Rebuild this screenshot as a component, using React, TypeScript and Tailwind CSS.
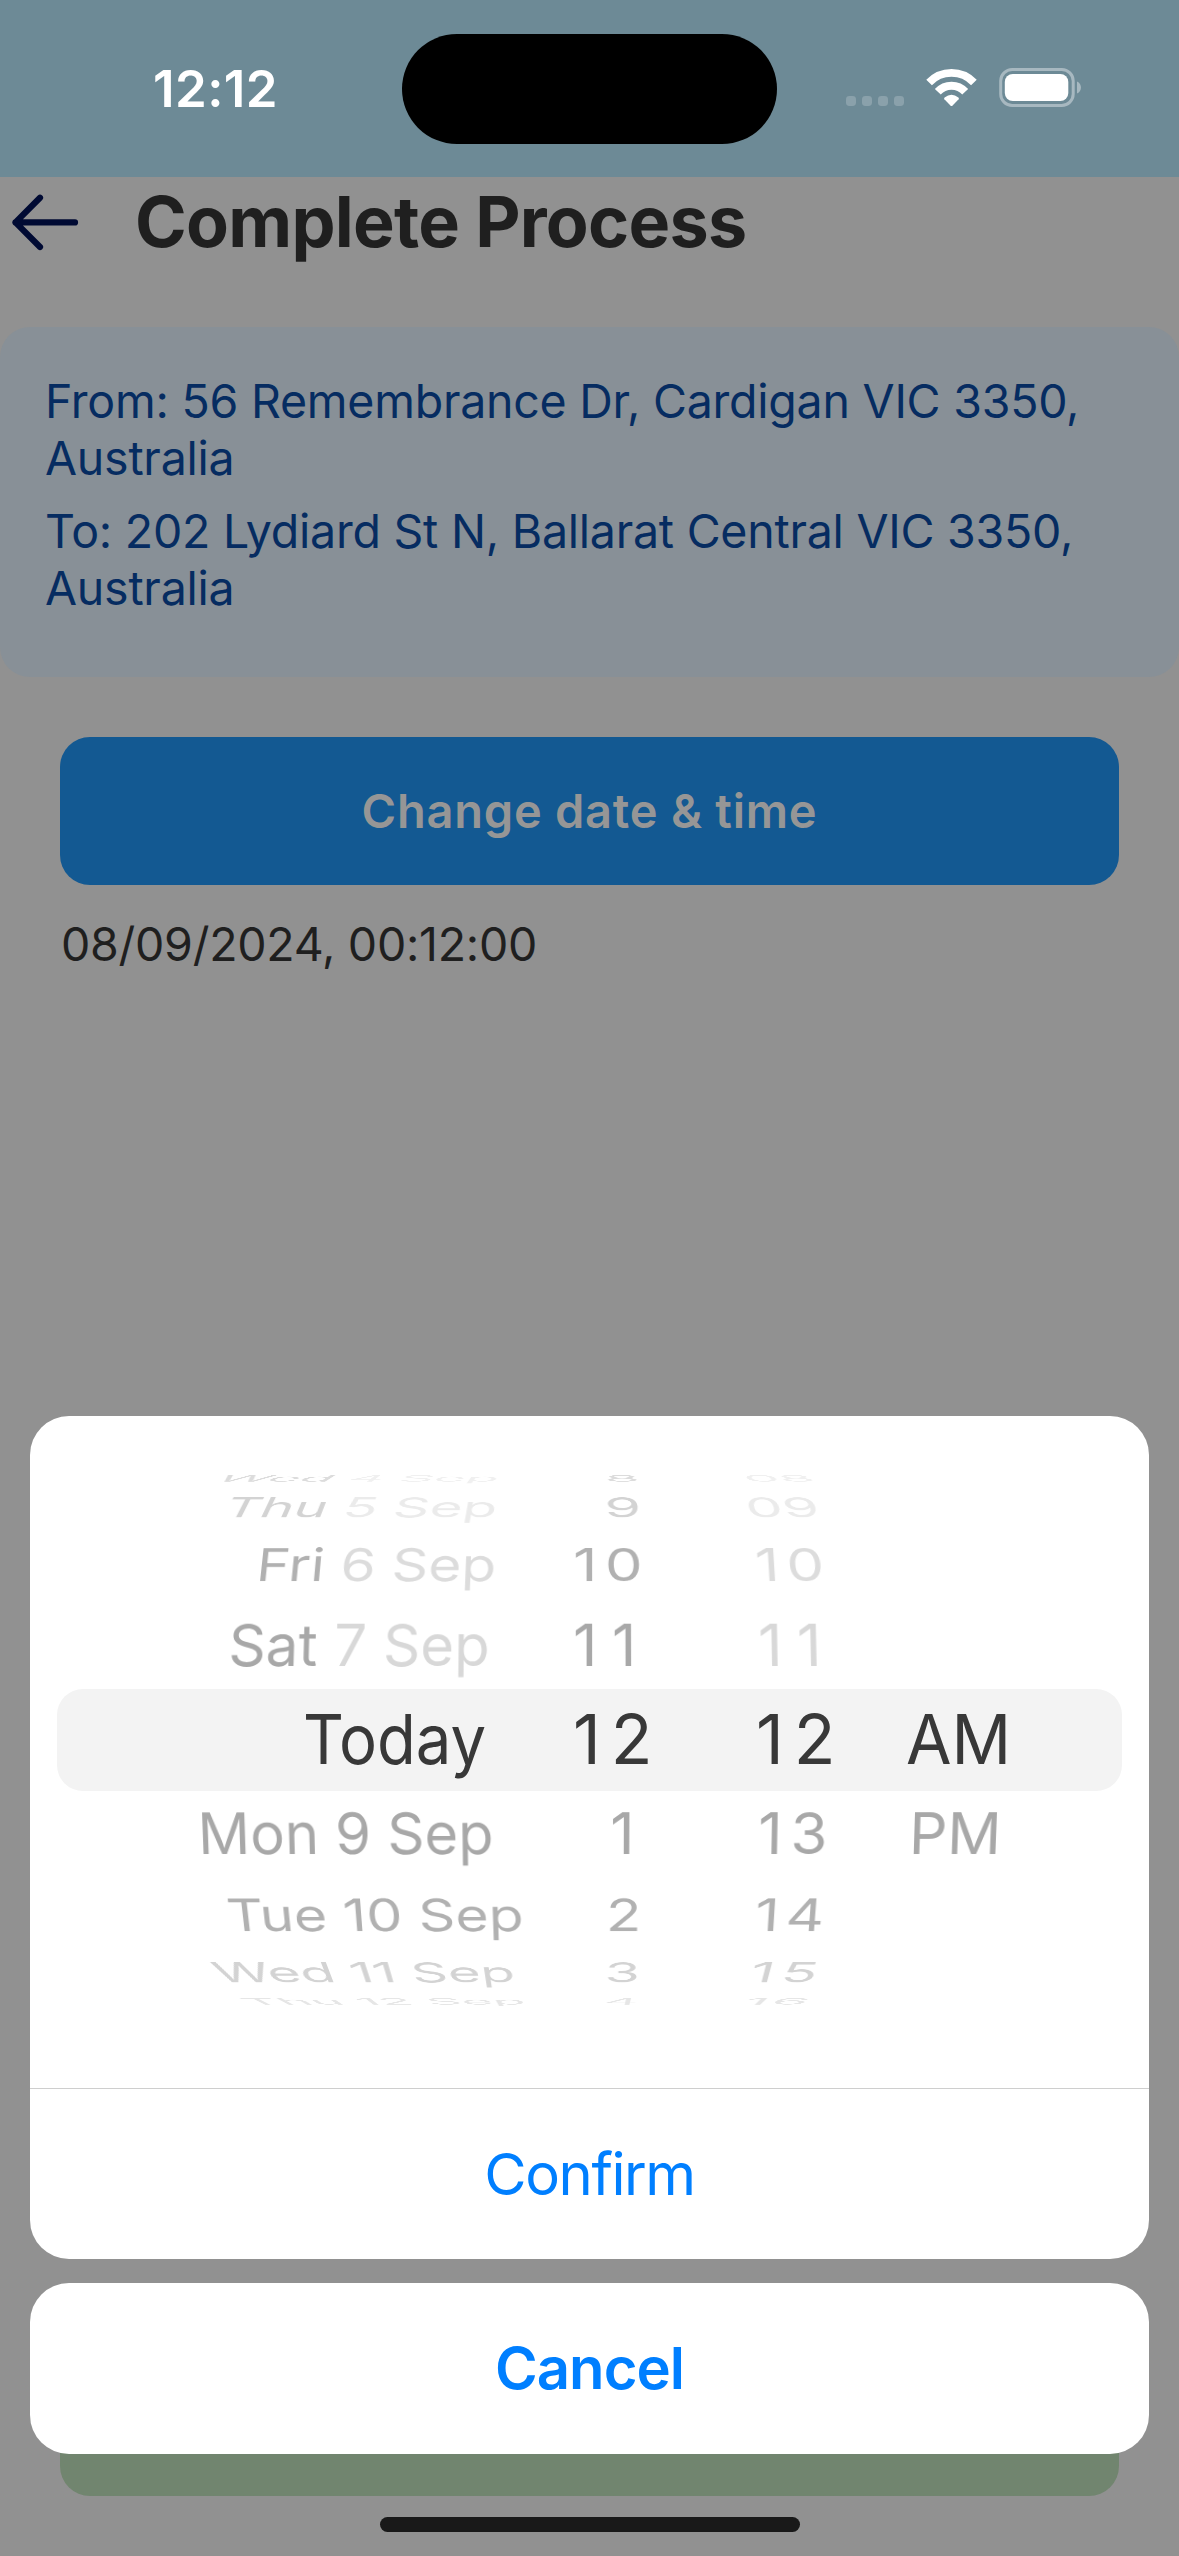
import type { ReactNode } from "react";

type Cell = {
  text: string;
  day?: string;
  left: number;
  scale?: number;
  spacing?: number;
  color?: string;
};

type WheelRow = {
  height: number;
  cap: number;
  tilt: number;
  side: "upper" | "lower";
  color: string;
  faded?: string;
  cells: Cell[];
};

const CAP = 43.66;
const COLUMN_WIDTHS = ["w-[503px]", "w-[170px]", "w-[160px]", "w-[232px]"];

const upperRows: WheelRow[] = [
  {
    height: 66, cap: 6.5, tilt: 0.04, side: "upper", color: "#dcdcdc", faded: "#f0f0f0",
    cells: [
      { day: "Wed", text: " 4 Sep", left: 154.6, scale: 0.919 },
      { text: "8", left: 45, scale: 0.955 },
      { text: "08", left: 17, scale: 0.944 },
    ],
  },
  {
    height: 36, cap: 20, tilt: 0.03, side: "upper", color: "#d3d3d3", faded: "#ebebeb",
    cells: [
      { day: "Thu", text: " 5 Sep", left: 163, scale: 0.951 },
      { text: "9", left: 44.8 },
      { text: "09", left: 18, scale: 0.988 },
    ],
  },
  {
    height: 64, cap: 33, tilt: 0.011, side: "upper", color: "#b1b1b1", faded: "#dcdcdc",
    cells: [
      { day: "Fri", text: " 6 Sep", left: 198.2, scale: 0.952 },
      { text: "10", left: 13, spacing: 7.6 },
      { text: "10", left: 26, spacing: 7 },
    ],
  },
  {
    height: 85, cap: 42, tilt: 0.004, side: "upper", color: "#a8a8a8", faded: "#d8d8d8",
    cells: [
      { day: "Sat", text: " 7 Sep", left: 170.8, scale: 0.97 },
      { text: "11", left: 13, spacing: 14.6 },
      { text: "11", left: 28.6, spacing: 14.6 },
    ],
  },
];

const lowerRows: WheelRow[] = [
  {
    height: 63, cap: 41.5, tilt: 0.004, side: "lower", color: "#a8a8a8",
    cells: [
      { text: "Mon 9 Sep", left: 140.4, scale: 0.966 },
      { text: "1", left: 50.3 },
      { text: "13", left: 28.6, spacing: 8.1 },
      { text: "PM", left: 19.7 },
    ],
  },
  {
    height: 77, cap: 32.5, tilt: 0.011, side: "lower", color: "#b1b1b1",
    cells: [
      { text: "Tue 10 Sep", left: 167.6, scale: 0.959 },
      { text: "2", left: 45.8, scale: 0.976 },
      { text: "14", left: 26, spacing: 6.7 },
    ],
  },
  {
    height: 51, cap: 20, tilt: 0.03, side: "lower", color: "#d3d3d3",
    cells: [
      { text: "Wed 11 Sep", left: 152, scale: 0.95 },
      { text: "3", left: 44.9, scale: 0.968 },
      { text: "15", left: 23, spacing: 7.3 },
    ],
  },
  {
    height: 22, cap: 6.5, tilt: 0.04, side: "lower", color: "#e6e6e6",
    cells: [
      { text: "Thu 12 Sep", left: 179.7, scale: 0.912 },
      { text: "4", left: 43.8, scale: 0.921 },
      { text: "16", left: 18, spacing: 3.6 },
    ],
  },
];

/* Flattens a row as if it were painted on the face of a cylinder. */
function wheelTransform({ cap, tilt, side }: WheelRow) {
  const ky = (cap / CAP) * (1 + tilt);
  const q = tilt / CAP;
  if (side === "upper") {
    return `matrix3d(1,0,0,0, 0,${ky},0,${-q}, 0,0,1,0, 0,0,0,1)`;
  }
  return `translateY(${-cap}px) matrix3d(1,0,0,0, 0,${ky},0,${q}, 0,0,1,0, 0,0,0,1) translateY(${CAP}px)`;
}

function Row({ row }: { row: WheelRow }) {
  return (
    <div className="flex items-end" style={{ height: row.height }}>
      <div
        className="flex h-[43.66px] w-full text-[60px] leading-[43.66px]"
        style={{ transform: wheelTransform(row), transformOrigin: "532px 100%", color: row.color }}
      >
        {row.cells.map((cell, i) => (
          <div key={i} className={COLUMN_WIDTHS[i]}>
            <WheelText cell={i === 2 && row.faded ? { ...cell, color: row.faded } : cell}>
              {cell.day ? (
                <>
                  {cell.day}
                  <span style={{ color: row.faded }}>{cell.text}</span>
                </>
              ) : (
                cell.text
              )}
            </WheelText>
          </div>
        ))}
      </div>
    </div>
  );
}

function WheelText({ cell, children }: { cell: Cell; children: ReactNode }) {
  return (
    <span
      className="block w-max origin-left whitespace-pre"
      style={{
        marginLeft: cell.left,
        transform: cell.scale ? `scaleX(${cell.scale})` : undefined,
        letterSpacing: cell.spacing,
        color: cell.color,
      }}
    >
      {children}
    </span>
  );
}

function StatusBar() {
  return (
    <header className="flex h-[177px] items-center bg-[#6d8a96]">
      <div className="w-[402px] pl-[153px] text-[51px] leading-none font-semibold tracking-[0.4px] text-white">12:12</div>
      <div className="mt-px h-[110px] w-[375px] rounded-full bg-black" />
      <svg className="ml-[69px] h-[55px] w-[240px]" viewBox="0 0 240 55" fill="none">
        <g fill="#8aa1ab">
          <rect x="0" y="35" width="10" height="10" rx="3.4" />
          <rect x="16" y="35" width="10" height="10" rx="3.4" />
          <rect x="32" y="35" width="10" height="10" rx="3.4" />
          <rect x="48" y="35" width="10" height="10" rx="3.4" />
        </g>
        <path d="M83.1 21.5A31 31 0 0 1 127.9 21.5" stroke="#fff" strokeWidth="7.8" />
        <path d="M91.8 30.8A18.6 18.6 0 0 1 119.2 30.8" stroke="#fff" strokeWidth="8" />
        <path d="M106.6 44.6q-1.1 1-2.2 0l-6-6.4q-.8-1 .2-1.8 6.9-5.3 13.8 0 1 .8.2 1.8z" fill="#fff" />
        <rect x="154.7" y="8.5" width="72.5" height="36" rx="11.5" stroke="#a7b8c0" strokeWidth="3" />
        <rect x="158.8" y="13" width="63.5" height="27" rx="8" fill="#fff" />
        <path d="M231 20.5c5.3 2 5.3 10 0 12z" fill="#a7b8c0" />
      </svg>
    </header>
  );
}

export default function App() {
  return (
    <div className="relative flex h-[2556px] w-[1179px] flex-col overflow-hidden bg-[#919191] font-['Inter',sans-serif]">
      <StatusBar />

      <div className="flex h-[89px] items-center pl-[11px]">
        <svg className="h-[58px] w-[68px]" viewBox="0 0 68 58" fill="none" stroke="#000a33" strokeWidth="6.2" strokeLinecap="round" strokeLinejoin="round">
          <path d="M64 29.4H4.5M29 4.8 4.5 29.4 29 54" />
        </svg>
        <h1 className="ml-[56px] text-[70px] leading-none font-bold tracking-[-0.72px] text-[#1f1f1f]">Complete Process</h1>
      </div>

      <section className="mt-[61px] flex h-[350px] flex-col gap-4 rounded-[30px] bg-[#889097] px-[45px] pt-[46px] text-[46.5px] leading-[57px] tracking-[-0.24px] text-[#062c61]">
        <p>From: 56 Remembrance Dr, Cardigan VIC 3350, Australia</p>
        <p>To: 202 Lydiard St N, Ballarat Central VIC 3350, Australia</p>
      </section>

      <button className="mx-[60px] mt-[60px] h-[148px] shrink-0 rounded-[30px] bg-[#135992] text-[47px] font-semibold tracking-[0.75px] text-[#969696]">
        Change date &amp; time
      </button>
      <p className="mt-[31px] ml-[61px] text-[46.5px] leading-[56px] tracking-[-0.27px] text-[#1f1f1f]">08/09/2024, 00:12:00</p>

      <div className="mx-[60px] mt-auto mb-[60px] h-[148px] shrink-0 rounded-[30px] bg-[#71856f]" />

      <div className="absolute inset-x-[30px] top-[1416px] flex flex-col gap-6">
        <div className="flex h-[843px] flex-col overflow-hidden rounded-[39px] bg-white">
          <div className="flex flex-1 flex-col px-[27px]">
            {upperRows.map((row, i) => (
              <Row key={i} row={row} />
            ))}
            <div className="mt-[22px] flex h-[102px] shrink-0 items-end rounded-[26px] bg-[#f3f3f3] pb-[26px] text-[68.5px] leading-[49.84px] text-[#383838]">
              <div className="w-[503px]">
                <WheelText cell={{ text: "Today", left: 246.2, scale: 0.926 }}>Today</WheelText>
              </div>
              <div className="w-[170px]">
                <WheelText cell={{ text: "12", left: 13, spacing: 10 }}>12</WheelText>
              </div>
              <div className="w-[160px]">
                <WheelText cell={{ text: "12", left: 26, spacing: 10 }}>12</WheelText>
              </div>
              <div className="w-[232px]">
                <WheelText cell={{ text: "AM", left: 16.4, scale: 0.964 }}>AM</WheelText>
              </div>
            </div>
            <div className="mt-px flex flex-col">
              {lowerRows.map((row, i) => (
                <Row key={i} row={row} />
              ))}
            </div>
          </div>
          <button className="h-[171px] shrink-0 border-t border-[#cecece] text-[58px] tracking-[-1.44px] text-[#007fff]">Confirm</button>
        </div>
        <button className="h-[171px] rounded-[39px] bg-white text-[58px] font-semibold tracking-[-0.94px] text-[#007fff]">Cancel</button>
      </div>

      <div className="absolute bottom-6 left-[380px] h-[15px] w-[420px] rounded-full bg-[#191919]" />
    </div>
  );
}
